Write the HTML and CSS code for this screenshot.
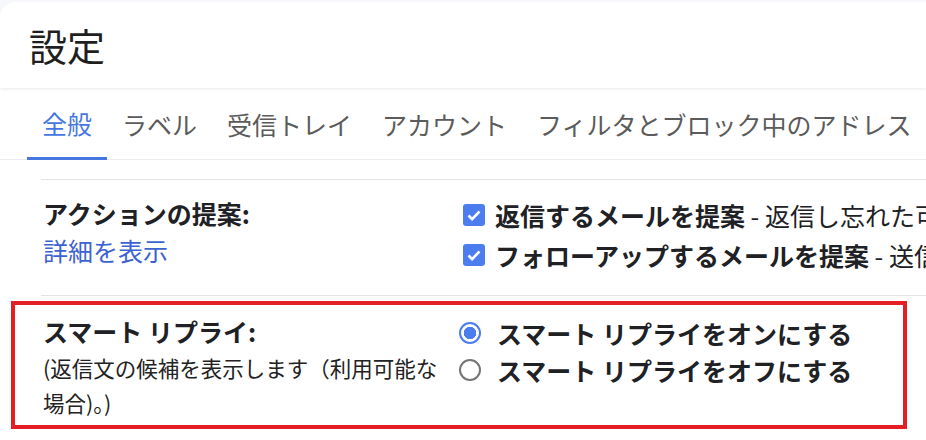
FILE: index.html
```html
<!DOCTYPE html>
<html>
	<head>
		<meta charset="UTF-8">
		<title>設定</title>
		<link rel="stylesheet" href="styles.css">
	</head>
	<body>
		<div class="card">
			<header class="head">
				<h1>設定</h1>
			</header>
			<nav class="tabs">
				<a class="tab active">全般</a>
				<a class="tab">ラベル</a>
				<a class="tab">受信トレイ</a>
				<a class="tab">アカウント</a>
				<a class="tab">フィルタとブロック中のアドレス</a>
			</nav>
			<div class="settings">
				<div class="row first">
					<div class="label">
						<b>アクションの提案:</b>
						<a class="more">詳細を表示</a>
					</div>
					<div class="options">
						<label class="opt">
							<span class="check"><svg viewBox="0 0 22 22" width="22" height="22"><path d="M5.5 11.5l3.6 3.6 7.4-7.6" fill="none" stroke="#fff" stroke-width="2.6"/></svg></span>
							<span><b>返信するメールを提案</b> - 返信し忘れた可能性のあるメールを受信トレイの一番上に表示します</span>
						</label>
						<label class="opt">
							<span class="check"><svg viewBox="0 0 22 22" width="22" height="22"><path d="M5.5 11.5l3.6 3.6 7.4-7.6" fill="none" stroke="#fff" stroke-width="2.6"/></svg></span>
							<span><b>フォローアップするメールを提案</b> - 送信したメールのうち、フォローアップが必要と思われるものを表示します</span>
						</label>
					</div>
				</div>
				<div class="row marked">
					<div class="label narrow">
						<b>スマート リプライ:</b>
						<p class="desc">(返信文の候補を表示します（利用可能な場合)。)</p>
					</div>
					<div class="options">
						<label class="opt radio-opt">
							<span class="radio on"></span>
							<b>スマート リプライをオンにする</b>
						</label>
						<label class="opt radio-opt">
							<span class="radio"></span>
							<b>スマート リプライをオフにする</b>
						</label>
					</div>
				</div>
			</div>
		</div>
	</body>
</html>
```

FILE: styles.css
```css
*{
	margin:0;
	padding:0;
}
body{
	background:#f6f8fc;
	font-family:"Noto Sans CJK JP","Noto Sans",sans-serif;
	color:#1f1f1f;
	overflow:hidden;
}
.card{
	margin-top:2px;
	height:438px;
	background:#fff;
	border-radius:16px 0 0 0;
	overflow:hidden;
}
.head{
	position:relative;
	height:86px;
	display:flex;
	align-items:center;
	padding-left:29px;
	box-shadow:0 1px 3px rgba(0,0,0,0.09);
}
.head h1{
	font-size:38px;
	font-weight:400;
	line-height:1;
	color:#1f1f1f;
}
.tabs{
	display:flex;
	height:71px;
	padding-left:27px;
	border-bottom:1px solid #ececec;
	white-space:nowrap;
}
.tab{
	display:flex;
	align-items:center;
	padding:1px 15px 0;
	font-size:25px;
	color:#5b5b5b;
}
.tab.active{
	color:#4677e0;
	border-bottom:3px solid #4677e0;
	margin-bottom:-1px;
}
.settings{
	margin:19px 0 0 41px;
}
.row{
	display:flex;
	border-top:1px solid #e3e3e3;
	font-size:25px;
}
.row.first{
	padding:15px 0 20px 2px;
	border-bottom:1px solid #e3e3e3;
}
.label{
	flex:none;
	width:420px;
	line-height:37px;
}
.label b{
	display:block;
	font-weight:700;
	color:#202124;
}
.more{
	display:block;
	color:#3d63d2;
}
.options{
	flex:1;
	min-width:0;
	overflow:hidden;
	white-space:nowrap;
}
.opt{
	display:flex;
	align-items:center;
	gap:10px;
	height:40px;
	color:#202124;
}
.opt b{
	font-weight:700;
}
.check{
	flex:none;
	width:22px;
	height:22px;
	border-radius:3px;
	background:#4c7def;
}
.check svg{
	display:block;
}
.row.marked{
	margin:5px 0 0 -30px;
	width:896px;
	box-sizing:border-box;
	border:4px solid #e31e25;
	padding:8px 0 5px 28px;
}
.label.narrow{
	width:416px;
	padding-right:8px;
	box-sizing:border-box;
}
.desc{
	font-size:21.5px;
	line-height:35px;
	color:#222;
}
.marked .options{
	padding-top:1px;
}
.radio-opt{
	height:37px;
	gap:16px;
}
.radio{
	flex:none;
	width:22px;
	height:22px;
	box-sizing:border-box;
	border:2px solid #757575;
	border-radius:50%;
}
.radio.on{
	border-color:#4c7def;
	background:radial-gradient(circle,#4c7def 0,#4c7def 6px,#fff 6.5px);
}
```
